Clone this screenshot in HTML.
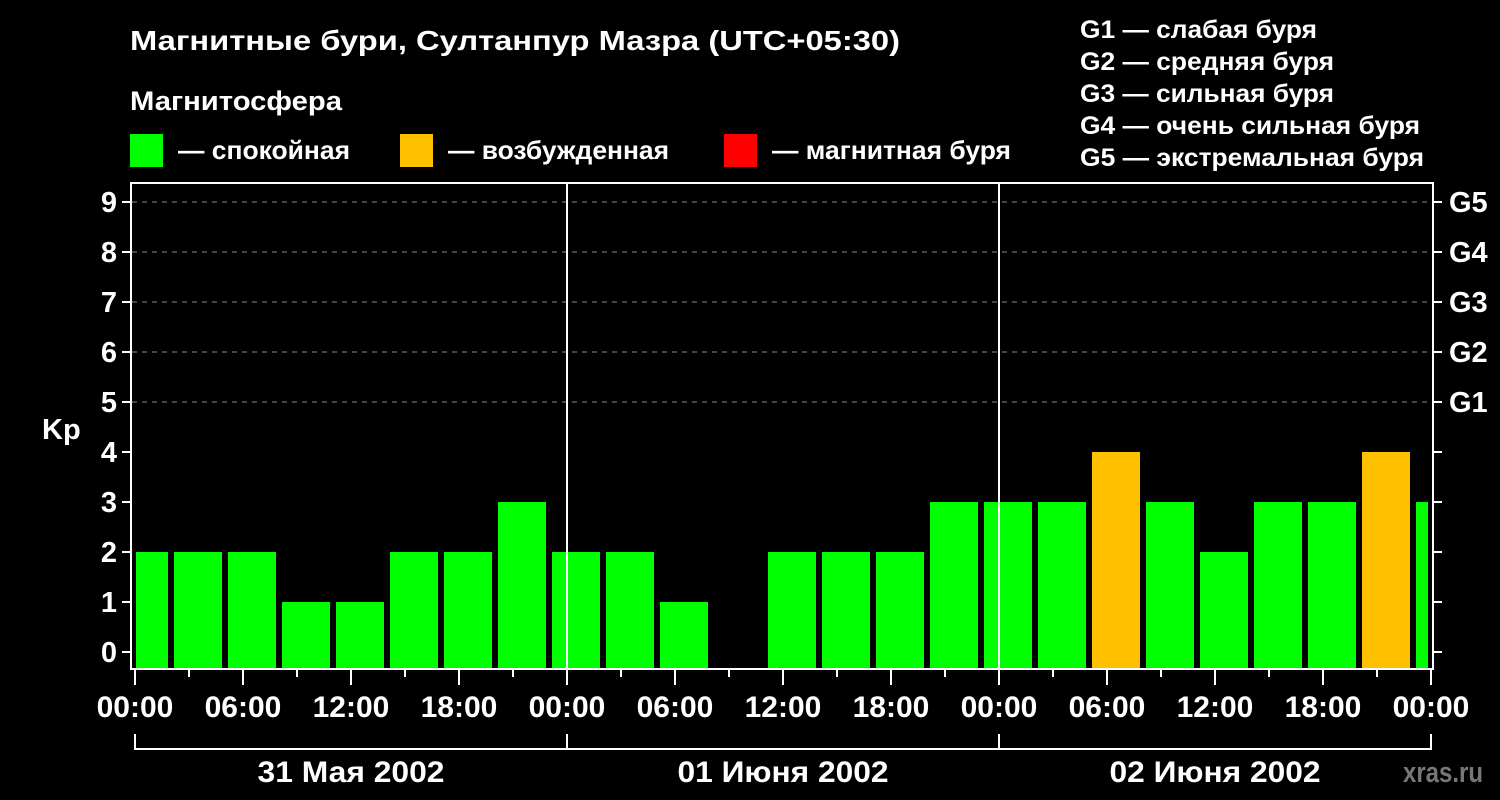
<!DOCTYPE html>
<html><head><meta charset="utf-8"><style>
html,body{margin:0;padding:0;background:#000;}
svg{display:block;font-family:"Liberation Sans",sans-serif;font-weight:bold;}
</style></head><body>
<svg width="1500" height="800" viewBox="0 0 1500 800" xmlns="http://www.w3.org/2000/svg">
<rect width="1500" height="800" fill="#000"/>
<g fill="#fff" lengthAdjust="spacingAndGlyphs">
<text x="130" y="50" font-size="28" textLength="770" lengthAdjust="spacingAndGlyphs">Магнитные бури, Султанпур Мазра (UTC+05:30)</text>
<text x="130" y="110" font-size="27" textLength="212" lengthAdjust="spacingAndGlyphs">Магнитосфера</text>
<text x="178" y="159" font-size="26" textLength="172" lengthAdjust="spacingAndGlyphs">— спокойная</text>
<text x="448" y="159" font-size="26" textLength="221" lengthAdjust="spacingAndGlyphs">— возбужденная</text>
<text x="772" y="159" font-size="26" textLength="239" lengthAdjust="spacingAndGlyphs">— магнитная буря</text>
</g>
<rect x="130" y="134" width="33" height="33" fill="#00ff00"/>
<rect x="400" y="134" width="33" height="33" fill="#ffc000"/>
<rect x="724" y="134" width="33" height="33" fill="#ff0000"/>
<g fill="#fff" font-size="25">
<text x="1080" y="38" textLength="237" lengthAdjust="spacingAndGlyphs">G1 — слабая буря</text>
<text x="1080" y="70" textLength="254" lengthAdjust="spacingAndGlyphs">G2 — средняя буря</text>
<text x="1080" y="102" textLength="254" lengthAdjust="spacingAndGlyphs">G3 — сильная буря</text>
<text x="1080" y="134" textLength="340" lengthAdjust="spacingAndGlyphs">G4 — очень сильная буря</text>
<text x="1080" y="166" textLength="344" lengthAdjust="spacingAndGlyphs">G5 — экстремальная буря</text>
</g>
<g stroke="#888" stroke-width="1" stroke-dasharray="5,5">
<line x1="132" y1="202" x2="1432" y2="202"/>
<line x1="132" y1="252" x2="1432" y2="252"/>
<line x1="132" y1="302" x2="1432" y2="302"/>
<line x1="132" y1="352" x2="1432" y2="352"/>
<line x1="132" y1="402" x2="1432" y2="402"/>
</g>
<g>
<rect x="136" y="552" width="32" height="116" fill="#0f0"/>
<rect x="174" y="552" width="48" height="116" fill="#0f0"/>
<rect x="228" y="552" width="48" height="116" fill="#0f0"/>
<rect x="282" y="602" width="48" height="66" fill="#0f0"/>
<rect x="336" y="602" width="48" height="66" fill="#0f0"/>
<rect x="390" y="552" width="48" height="116" fill="#0f0"/>
<rect x="444" y="552" width="48" height="116" fill="#0f0"/>
<rect x="498" y="502" width="48" height="166" fill="#0f0"/>
<rect x="552" y="552" width="48" height="116" fill="#0f0"/>
<rect x="606" y="552" width="48" height="116" fill="#0f0"/>
<rect x="660" y="602" width="48" height="66" fill="#0f0"/>
<rect x="768" y="552" width="48" height="116" fill="#0f0"/>
<rect x="822" y="552" width="48" height="116" fill="#0f0"/>
<rect x="876" y="552" width="48" height="116" fill="#0f0"/>
<rect x="930" y="502" width="48" height="166" fill="#0f0"/>
<rect x="984" y="502" width="48" height="166" fill="#0f0"/>
<rect x="1038" y="502" width="48" height="166" fill="#0f0"/>
<rect x="1092" y="452" width="48" height="216" fill="#ffc000"/>
<rect x="1146" y="502" width="48" height="166" fill="#0f0"/>
<rect x="1200" y="552" width="48" height="116" fill="#0f0"/>
<rect x="1254" y="502" width="48" height="166" fill="#0f0"/>
<rect x="1308" y="502" width="48" height="166" fill="#0f0"/>
<rect x="1362" y="452" width="48" height="216" fill="#ffc000"/>
<rect x="1416" y="502" width="12" height="166" fill="#0f0"/>
</g>
<g stroke="#fff" stroke-width="2" fill="none">
<rect x="131" y="183" width="1302" height="486"/>
<line x1="567" y1="183" x2="567" y2="669"/>
<line x1="999" y1="183" x2="999" y2="669"/>
<path d="M122 202h9M122 252h9M122 302h9M122 352h9M122 402h9M122 452h9M122 502h9M122 552h9M122 602h9M122 652h9"/>
<path d="M1433 202h9M1433 252h9M1433 302h9M1433 352h9M1433 402h9M1433 452h9M1433 502h9M1433 552h9M1433 602h9M1433 652h9"/>
<path d="M135 669v16M189 669v8M243 669v16M297 669v8M351 669v16M405 669v8M459 669v16M513 669v8M567 669v16M621 669v8M675 669v16M729 669v8M783 669v16M837 669v8M891 669v16M945 669v8M999 669v16M1053 669v8M1107 669v16M1161 669v8M1215 669v16M1269 669v8M1323 669v16M1377 669v8M1431 669v16"/>
<path d="M135 734v15h1296v-15M567 734v15M999 734v15"/>
</g>
<g fill="#fff" font-size="29" text-anchor="end">
<text x="117" y="212">9</text><text x="117" y="262">8</text><text x="117" y="312">7</text><text x="117" y="362">6</text><text x="117" y="412">5</text><text x="117" y="462">4</text><text x="117" y="512">3</text><text x="117" y="562">2</text><text x="117" y="612">1</text><text x="117" y="662">0</text>
</g>
<text x="42" y="439" fill="#fff" font-size="29">Kp</text>
<g fill="#fff" font-size="29">
<text x="1449" y="212">G5</text><text x="1449" y="262">G4</text><text x="1449" y="312">G3</text><text x="1449" y="362">G2</text><text x="1449" y="412">G1</text>
</g>
<g fill="#fff" font-size="30" text-anchor="middle">
<text x="135" y="717">00:00</text><text x="243" y="717">06:00</text><text x="351" y="717">12:00</text><text x="459" y="717">18:00</text>
<text x="567" y="717">00:00</text><text x="675" y="717">06:00</text><text x="783" y="717">12:00</text><text x="891" y="717">18:00</text>
<text x="999" y="717">00:00</text><text x="1107" y="717">06:00</text><text x="1215" y="717">12:00</text><text x="1323" y="717">18:00</text><text x="1431" y="717">00:00</text>
<text x="351" y="782" textLength="187" lengthAdjust="spacingAndGlyphs">31 Мая 2002</text><text x="783" y="782" textLength="211" lengthAdjust="spacingAndGlyphs">01 Июня 2002</text><text x="1215" y="782" textLength="211" lengthAdjust="spacingAndGlyphs">02 Июня 2002</text>
</g>
<text x="1403" y="782" fill="#777" font-size="29" textLength="80" lengthAdjust="spacingAndGlyphs">xras.ru</text>
</svg>
</body></html>
